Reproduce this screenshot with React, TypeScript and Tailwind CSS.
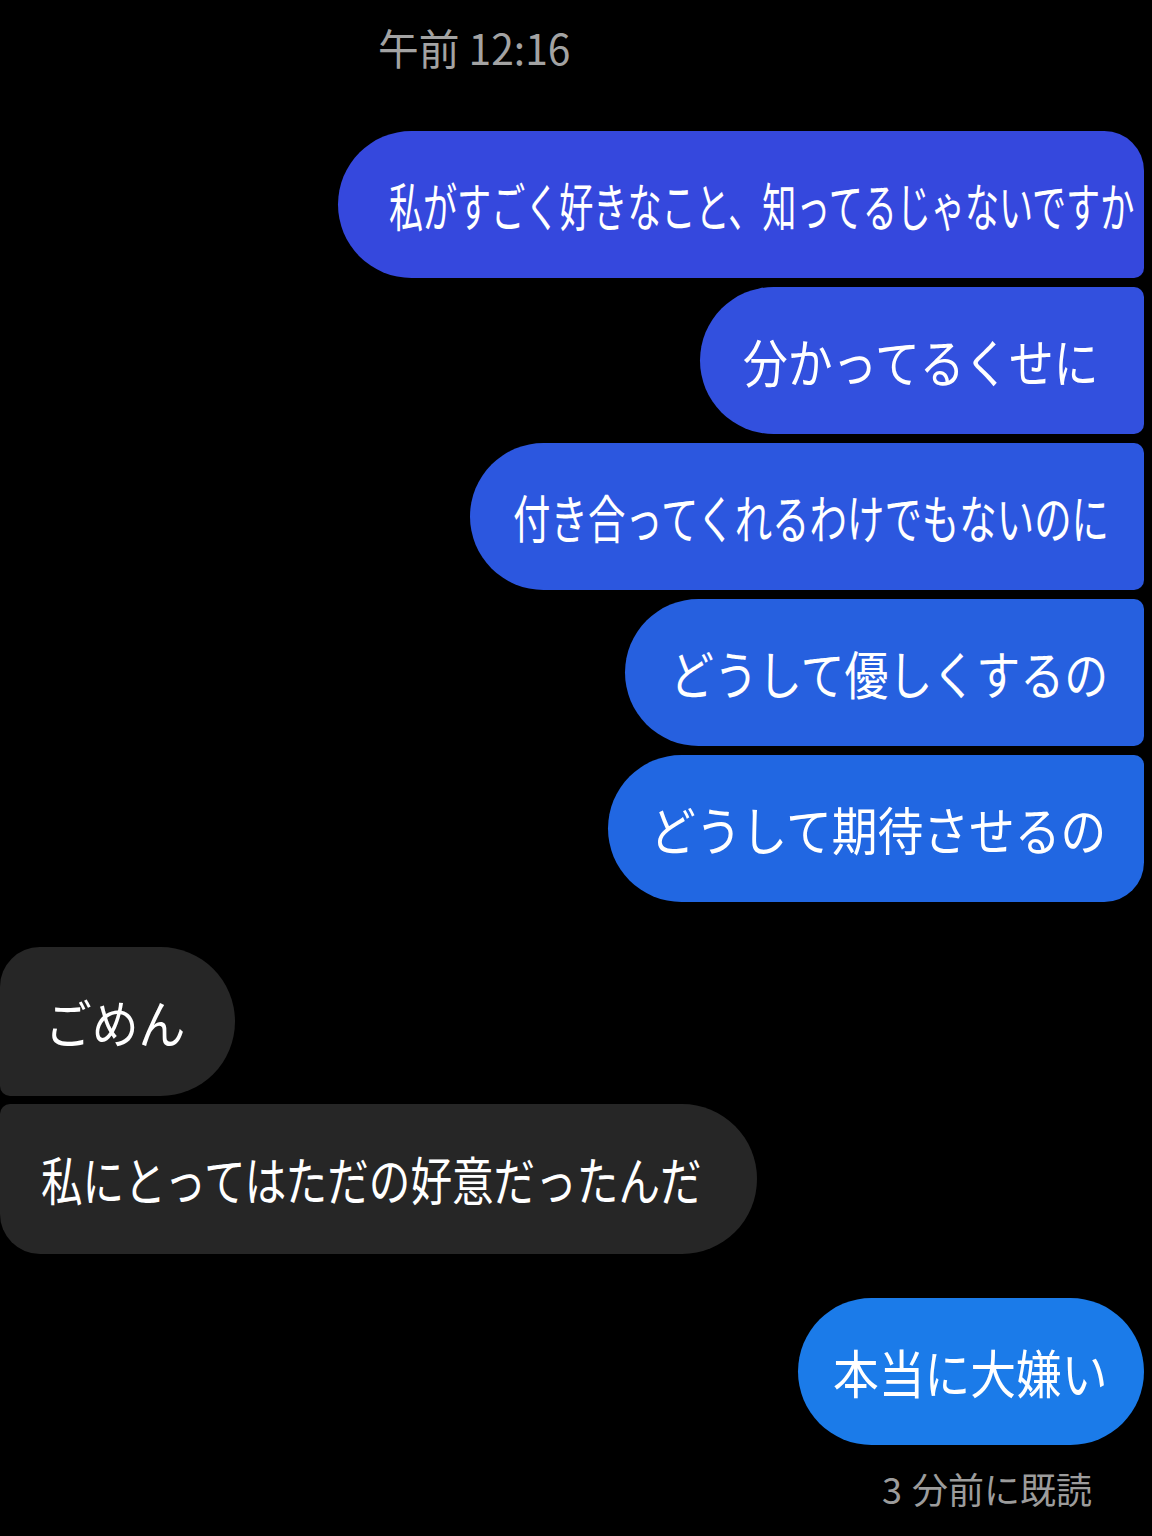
import React from "react";

const font = { fontFamily: '"Noto Sans CJK JP", "Noto Sans", sans-serif' };

export default function App() {
  return (
    <div className="w-[1152px] h-[1536px] bg-black overflow-hidden text-white" style={font}>
      <div className="pt-[19px] pl-[378px] text-[42px] leading-[56px] text-[#a3a3a3] whitespace-nowrap">
        <span className="inline-block origin-left scale-x-[0.97]">午前 12:16</span>
      </div>

      <div className="mt-[56px] flex flex-col items-end gap-[9px] pr-[8px]">
        <div className="w-[806px] h-[147px] bg-[#3548dd] rounded-l-[74px] rounded-tr-[40px] rounded-br-[10px] flex items-center pl-[51px] overflow-visible">
          <span className="shrink-0 inline-block whitespace-nowrap text-[52px] leading-none origin-left scale-x-[0.655]">私がすごく好きなこと、知ってるじゃないですか</span>
        </div>
        <div className="w-[444px] h-[147px] bg-[#3250de] rounded-l-[74px] rounded-r-[10px] flex items-center pl-[43px]">
          <span className="shrink-0 inline-block whitespace-nowrap text-[52px] leading-none origin-left scale-x-[0.86]">分かってるくせに</span>
        </div>
        <div className="w-[674px] h-[147px] bg-[#2c57df] rounded-l-[74px] rounded-r-[10px] flex items-center pl-[43px]">
          <span className="shrink-0 inline-block whitespace-nowrap text-[52px] leading-none origin-left scale-x-[0.72]">付き合ってくれるわけでもないのに</span>
        </div>
        <div className="w-[519px] h-[147px] bg-[#2660df] rounded-l-[74px] rounded-r-[10px] flex items-center pl-[45px]">
          <span className="shrink-0 inline-block whitespace-nowrap text-[52px] leading-none origin-left scale-x-[0.845]">どうして優しくするの</span>
        </div>
        <div className="w-[536px] h-[147px] bg-[#2167e2] rounded-l-[74px] rounded-tr-[10px] rounded-br-[40px] flex items-center pl-[42px]">
          <span className="shrink-0 inline-block whitespace-nowrap text-[52px] leading-none origin-left scale-x-[0.88]">どうして期待させるの</span>
        </div>
      </div>

      <div className="mt-[45px] flex flex-col items-start gap-[8px]">
        <div className="w-[235px] h-[149px] bg-[#262626] rounded-r-[75px] rounded-tl-[40px] rounded-bl-[10px] flex items-center pl-[45px]">
          <span className="shrink-0 inline-block whitespace-nowrap text-[52px] leading-none origin-left scale-x-[0.9]">ごめん</span>
        </div>
        <div className="w-[757px] h-[150px] bg-[#262626] rounded-r-[75px] rounded-tl-[10px] rounded-bl-[40px] flex items-center pl-[41px]">
          <span className="shrink-0 inline-block whitespace-nowrap text-[52px] leading-none origin-left scale-x-[0.8]">私にとってはただの好意だったんだ</span>
        </div>
      </div>

      <div className="mt-[44px] flex flex-col items-end pr-[8px]">
        <div className="w-[346px] h-[147px] bg-[#1b7be9] rounded-full flex items-center pl-[35px]">
          <span className="shrink-0 inline-block whitespace-nowrap text-[52px] leading-none origin-left scale-x-[0.88]">本当に大嫌い</span>
        </div>
        <div className="mt-[20px] mr-[52px] text-[36px] leading-[46px] text-[#9c9c9c] whitespace-nowrap">
          <span className="mr-[10px]">3</span>分前に既読
        </div>
      </div>
    </div>
  );
}
